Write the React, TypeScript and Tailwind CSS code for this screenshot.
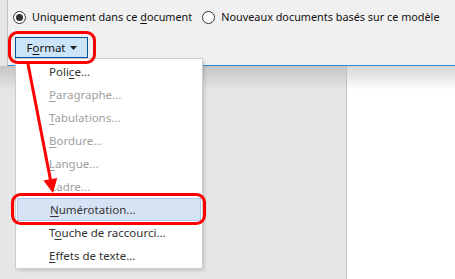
import React from "react";

const font = { fontFamily: '"Segoe UI", "Noto Sans", "Liberation Sans", sans-serif' };

interface Item {
  before: string;
  key: string;
  after: string;
  disabled?: boolean;
  active?: boolean;
}

const items: Item[] = [
  { before: "Poli", key: "c", after: "e..." },
  { before: "", key: "P", after: "aragraphe...", disabled: true },
  { before: "", key: "T", after: "abulations...", disabled: true },
  { before: "", key: "B", after: "ordure...", disabled: true },
  { before: "", key: "L", after: "angue...", disabled: true },
  { before: "", key: "C", after: "adre...", disabled: true },
  { before: "", key: "N", after: "umérotation...", active: true },
  { before: "T", key: "o", after: "uche de raccourci..." },
  { before: "", key: "E", after: "ffets de texte..." },
];

const Radio = ({ checked }: { checked?: boolean }) => (
  <span className="w-[13px] h-[13px] rounded-full border border-[#333] bg-white flex items-center justify-center shrink-0">
    {checked && <span className="w-[7px] h-[7px] rounded-full bg-[#333]" />}
  </span>
);

const MenuRow = ({ item }: { item: Item }) => (
  <div
    className={`h-[23px] flex items-center whitespace-nowrap ${
      item.active ? "mx-[1px] pl-[32px] bg-[#d6e3f4] border border-[#a9c6ec]" : "mx-[2px] pl-[31px]"
    } ${item.disabled ? "text-[#a0a0a0]" : "text-[#333]"}`}
  >
    <span>
      {item.before}
      <span className="underline underline-offset-2">{item.key}</span>
      {item.after}
    </span>
  </div>
);

export default function App() {
  return (
    <div
      className="relative w-[455px] h-[279px] overflow-hidden bg-[#e6e6e6] flex flex-col text-[11.5px] leading-none"
      style={font}
    >
      <div className="flex h-[66px] shrink-0">
        <div className="w-[7px] shrink-0" />
        <div className="flex-1 min-w-0 flex flex-col bg-[#f0f0f0] border-l border-[#c4c4c4] border-b border-b-[#2b88d8]">
          <div className="flex items-center h-[20px] mt-[7px] pl-[5px] text-[#111] text-[10.85px] whitespace-nowrap">
            <Radio checked />
            <span className="ml-[6px]">
              Uniquement dans ce <span className="underline underline-offset-2">d</span>ocument
            </span>
            <span className="ml-[10px]">
              <Radio />
            </span>
            <span className="ml-[6px]">Nouveaux documents basés sur ce modèle</span>
          </div>
          <div className="pl-[7px] mt-[10px]">
            <button className="w-[73px] h-[21px] bg-[#cce4f7] border border-[#005499] text-[#111] flex items-center justify-center gap-[4px]">
              <span>
                F<span className="underline underline-offset-2">o</span>rmat
              </span>
              <svg width="7" height="4" viewBox="0 0 7 4">
                <path d="M0 0h7L3.5 4z" fill="#222" />
              </svg>
            </button>
          </div>
        </div>
      </div>

      <div className="flex flex-1">
        <div className="w-[347px] shrink-0 border-r border-[#c2c2c2] bg-[linear-gradient(to_bottom,#c4c4c4,#e6e6e6_24px)]" />
        <div className="flex-1 bg-[linear-gradient(to_bottom,#d6d6d6,#ffffff_24px)]" />
      </div>

      <div className="absolute left-[15px] top-[58px] w-[188px] bg-white border border-[#cccccc] py-[1px] shadow-[2px_2px_3px_rgba(0,0,0,0.12)]">
        {items.map((item, idx) => (
          <MenuRow item={item} key={idx} />
        ))}
      </div>

      <svg className="absolute inset-0 pointer-events-none" width="455" height="279" viewBox="0 0 455 279">
        <rect x="9.5" y="32.5" width="85" height="30" rx="8" fill="none" stroke="#ff0000" strokeWidth="3" />
        <rect x="12.5" y="194.5" width="192" height="29" rx="8" fill="none" stroke="#ff0000" strokeWidth="3" />
        <line x1="28" y1="64" x2="50.5" y2="180" stroke="#ff0000" strokeWidth="3" />
        <path d="M53 193L43.4 180.6L57.2 178z" fill="#ff0000" />
      </svg>
    </div>
  );
}
